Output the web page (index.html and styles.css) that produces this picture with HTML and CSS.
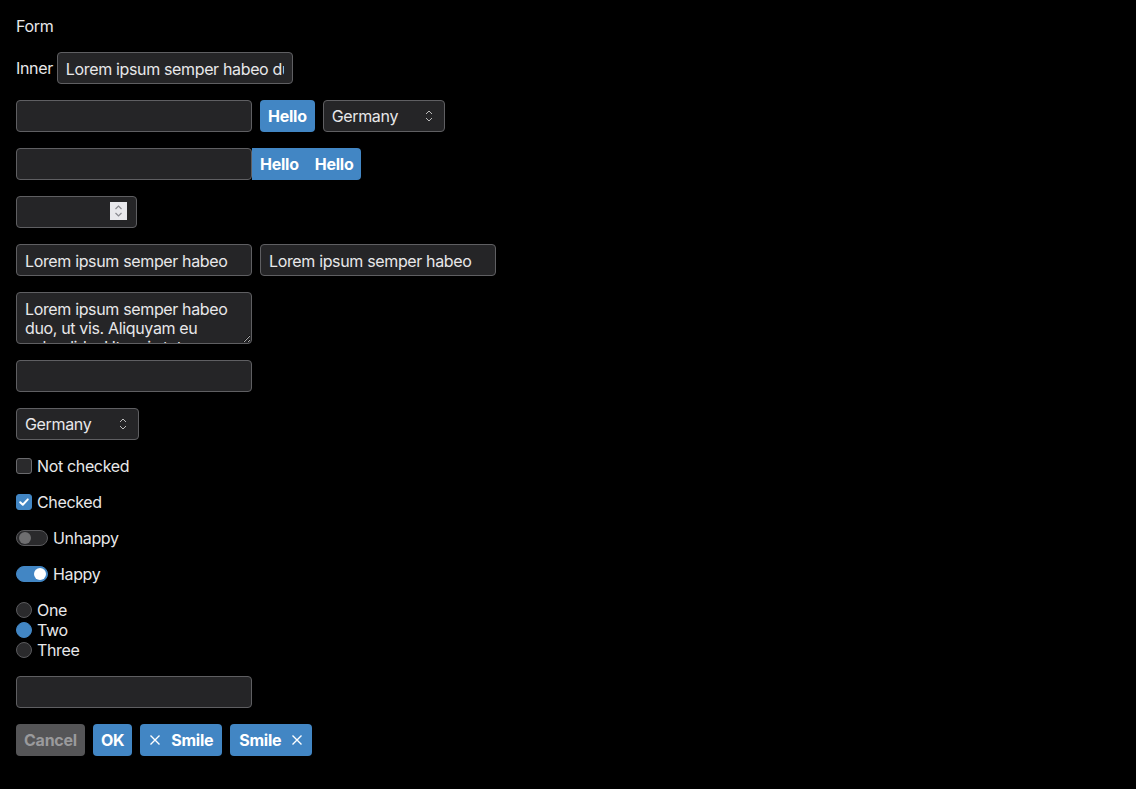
FILE: index.html
```html
<!DOCTYPE html>
<html>
<head>
<meta charset="utf-8">
<link rel="stylesheet" href="styles.css">
</head>
<body>
<form class="form">
  <div class="title">Form</div>
  <div class="row tight">
    <label class="lbl">Inner</label>
    <input class="field" type="text" value="Lorem ipsum semper habeo duo, ut vis.">
  </div>
  <div class="row">
    <input class="field" type="text">
    <button type="button" class="btn primary">Hello</button>
    <div class="select sel-a">Germany<svg class="chev" viewBox="0 0 8 14" width="8" height="14"><path d="M1 5 L4 2 L7 5 M1 9 L4 12 L7 9" fill="none" stroke="#bbb" stroke-width="1"/></svg></div>
  </div>
  <div class="row group">
    <input class="field" type="text">
    <div class="btn-group">
      <button type="button" class="btn primary">Hello</button>
      <button type="button" class="btn primary">Hello</button>
    </div>
  </div>
  <div class="row">
    <div class="num">
      <input class="field num-field" type="text">
      <span class="spin"><svg viewBox="0 0 17 18" width="17" height="18"><path d="M5.5 7 L8.5 4 L11.5 7 M5.5 11 L8.5 14 L11.5 11" fill="none" stroke="#8a8a90" stroke-width="1.2"/></svg></span>
    </div>
  </div>
  <div class="row">
    <input class="field" type="text" value="Lorem ipsum semper habeo">
    <input class="field" type="text" value="Lorem ipsum semper habeo">
  </div>
  <div class="row">
    <textarea class="area">Lorem ipsum semper habeo duo, ut vis. Aliquyam eu splendide. Ut mei stet</textarea>
  </div>
  <div class="row">
    <input class="field" type="text">
  </div>
  <div class="row">
    <div class="select sel-b">Germany<svg class="chev" viewBox="0 0 8 14" width="8" height="14"><path d="M1 5 L4 2 L7 5 M1 9 L4 12 L7 9" fill="none" stroke="#bbb" stroke-width="1"/></svg></div>
  </div>
  <div class="check"><span class="box"></span>Not checked</div>
  <div class="check"><span class="box on"><svg viewBox="0 0 16 16" width="16" height="16"><path d="M4.2 8.2 L6.8 10.8 L11.8 5.4" fill="none" stroke="#fff" stroke-width="2" stroke-linecap="round" stroke-linejoin="round"/></svg></span>Checked</div>
  <div class="check"><span class="toggle"><span class="knob"></span></span>Unhappy</div>
  <div class="check"><span class="toggle on"><span class="knob"></span></span>Happy</div>
  <div class="radios">
    <div class="check"><span class="radio"></span>One</div>
    <div class="check"><span class="radio on"></span>Two</div>
    <div class="check"><span class="radio"></span>Three</div>
  </div>
  <div class="row">
    <input class="field" type="text">
  </div>
  <div class="row">
    <button type="button" class="btn cancel">Cancel</button>
    <button type="button" class="btn primary">OK</button>
    <button type="button" class="btn primary icon"><svg viewBox="0 0 12 12" width="12" height="12"><path d="M1.5 1.5 L10.5 10.5 M10.5 1.5 L1.5 10.5" stroke="#fff" stroke-width="1.4" fill="none"/></svg>Smile</button>
    <button type="button" class="btn primary icon">Smile<svg viewBox="0 0 12 12" width="12" height="12"><path d="M1.5 1.5 L10.5 10.5 M10.5 1.5 L1.5 10.5" stroke="#fff" stroke-width="1.4" fill="none"/></svg></button>
  </div>
</form>
</body>
</html>
```
FILE: styles.css
```css
* { box-sizing: border-box; }
html, body { background: #000; }
body {
  margin: 0;
  padding: 16px;
  font-family: Inter, "Liberation Sans", sans-serif;
  font-size: 16px;
  line-height: 20px;
  letter-spacing: -0.35px;
  color: #e8e8ea;
}
.form {
  display: flex;
  flex-direction: column;
  gap: 16px;
  margin: 0;
}
.title { height: 20px; }
.row {
  display: flex;
  align-items: center;
  gap: 8px;
}
.row.tight { gap: 4px; }
.row.group { gap: 0; }
.lbl { line-height: 20px; }
.field {
  width: 236px;
  height: 32px;
  padding: 1px 8px 0;
  border: 1px solid #5f5f62;
  border-radius: 4px;
  background: #252527;
  color: #e8e8ea;
  font: inherit;
  letter-spacing: inherit;
  outline: none;
}
.btn {
  height: 32px;
  padding: 0 8px;
  border: none;
  border-radius: 4px;
  font-family: Inter, "Liberation Sans", sans-serif;
  font-size: 16px;
  font-weight: 700;
  letter-spacing: -0.25px;
  color: #fff;
  display: inline-flex;
  align-items: center;
  gap: 10px;
}
.primary { background: #4286c4; }
.cancel { background: #555557; color: #9a9a9c; }
.btn.icon { padding: 0 9px; }
.btn-group { display: flex; }
.btn-group .btn { border-radius: 0; }
.btn-group .btn:last-child { border-radius: 0 4px 4px 0; }
.select {
  position: relative;
  height: 32px;
  padding: 0 8px;
  border: 1px solid #5f5f62;
  border-radius: 4px;
  background: #252527;
  display: flex;
  align-items: center;
}
.sel-a { width: 122px; }
.sel-b { width: 123px; }
.chev {
  position: absolute;
  right: 11px;
  top: 8px;
}
.num { position: relative; }
.num-field { width: 121px; }
.spin {
  position: absolute;
  left: 94px;
  top: 6px;
  width: 17px;
  height: 18px;
  background: #e8e8ec;
  display: block;
}
.spin svg { display: block; }
.area {
  width: 236px;
  height: 52px;
  padding: 7px 8px 0;
  border: 1px solid #5f5f62;
  border-radius: 4px;
  background: #252527;
  color: #e8e8ea;
  font: inherit;
  letter-spacing: inherit;
  line-height: 19px;
  resize: vertical;
  overflow: hidden;
  outline: none;
}
.check {
  display: flex;
  align-items: center;
  gap: 5px;
  height: 20px;
}
.box {
  width: 16px;
  height: 16px;
  border: 1px solid #6a6a6d;
  border-radius: 3px;
  background: #2a2a2c;
  display: block;
}
.box.on { background: #4286c4; border-color: #4286c4; }
.box svg { display: block; margin: -1px; }
.toggle {
  position: relative;
  width: 32px;
  height: 16px;
  border-radius: 8px;
  border: 1px solid #5a5a5d;
  background: #2a2a2c;
  display: block;
}
.toggle .knob {
  position: absolute;
  left: 2px;
  top: 1px;
  width: 12px;
  height: 12px;
  border-radius: 50%;
  background: #6e6e70;
}
.toggle.on { background: #4286c4; border-color: #4286c4; }
.toggle.on .knob { left: auto; right: 1px; background: #fff; }
.radios { display: flex; flex-direction: column; }
.radio {
  width: 16px;
  height: 16px;
  border-radius: 50%;
  border: 1px solid #5a5a5d;
  background: #2a2a2c;
  display: block;
}
.radio.on { background: #4286c4; border-color: #4286c4; }
```
